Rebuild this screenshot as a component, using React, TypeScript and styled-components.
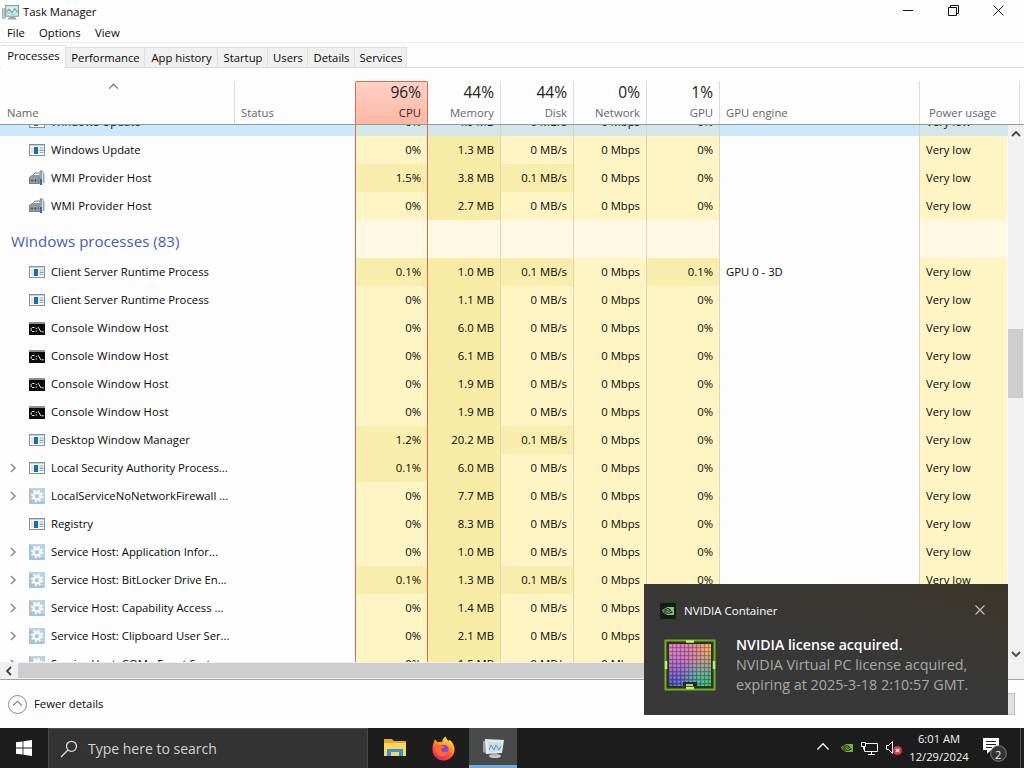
import React from "react";
import styled, { createGlobalStyle, css } from "styled-components";
import { SiNvidia } from "react-icons/si";

type IconKind = "app" | "wmi" | "console" | "gear";

type Process = {
  name: string;
  icon: IconKind;
  cpu: string;
  memory: string;
  disk: string;
  gpu?: string;
  engine?: string;
  expandable?: boolean;
  selected?: boolean;
};

const backgroundProcesses: Process[] = [
  { name: "Windows Update", icon: "app", cpu: "0%", memory: "4.9 MB", disk: "0 MB/s", selected: true },
  { name: "Windows Update", icon: "app", cpu: "0%", memory: "1.3 MB", disk: "0 MB/s" },
  { name: "WMI Provider Host", icon: "wmi", cpu: "1.5%", memory: "3.8 MB", disk: "0.1 MB/s" },
  { name: "WMI Provider Host", icon: "wmi", cpu: "0%", memory: "2.7 MB", disk: "0 MB/s" },
];

const windowsProcesses: Process[] = [
  { name: "Client Server Runtime Process", icon: "app", cpu: "0.1%", memory: "1.0 MB", disk: "0.1 MB/s", gpu: "0.1%", engine: "GPU 0 - 3D" },
  { name: "Client Server Runtime Process", icon: "app", cpu: "0%", memory: "1.1 MB", disk: "0 MB/s" },
  { name: "Console Window Host", icon: "console", cpu: "0%", memory: "6.0 MB", disk: "0 MB/s" },
  { name: "Console Window Host", icon: "console", cpu: "0%", memory: "6.1 MB", disk: "0 MB/s" },
  { name: "Console Window Host", icon: "console", cpu: "0%", memory: "1.9 MB", disk: "0 MB/s" },
  { name: "Console Window Host", icon: "console", cpu: "0%", memory: "1.9 MB", disk: "0 MB/s" },
  { name: "Desktop Window Manager", icon: "app", cpu: "1.2%", memory: "20.2 MB", disk: "0.1 MB/s" },
  { name: "Local Security Authority Process...", icon: "app", cpu: "0.1%", memory: "6.0 MB", disk: "0 MB/s", expandable: true },
  { name: "LocalServiceNoNetworkFirewall ...", icon: "gear", cpu: "0%", memory: "7.7 MB", disk: "0 MB/s", expandable: true },
  { name: "Registry", icon: "app", cpu: "0%", memory: "8.3 MB", disk: "0 MB/s" },
  { name: "Service Host: Application Infor...", icon: "gear", cpu: "0%", memory: "1.0 MB", disk: "0 MB/s", expandable: true },
  { name: "Service Host: BitLocker Drive En...", icon: "gear", cpu: "0.1%", memory: "1.3 MB", disk: "0.1 MB/s", expandable: true },
  { name: "Service Host: Capability Access ...", icon: "gear", cpu: "0%", memory: "1.4 MB", disk: "0 MB/s", expandable: true },
  { name: "Service Host: Clipboard User Ser...", icon: "gear", cpu: "0%", memory: "2.1 MB", disk: "0 MB/s", expandable: true },
  { name: "Service Host: COM+ Event Syste...", icon: "gear", cpu: "0%", memory: "1.5 MB", disk: "0 MB/s", expandable: true },
];

const tabs = [
  { label: "Processes", width: 65 },
  { label: "Performance", width: 79 },
  { label: "App history", width: 73 },
  { label: "Startup", width: 50 },
  { label: "Users", width: 40 },
  { label: "Details", width: 47 },
  { label: "Services", width: 52 },
];

const usageColumns = [
  { label: "CPU", total: "96%" },
  { label: "Memory", total: "44%" },
  { label: "Disk", total: "44%" },
  { label: "Network", total: "0%" },
  { label: "GPU", total: "1%" },
];

const ProcessIcon = ({ kind }: { kind: IconKind }) => {
  if (kind === "console") {
    return (
      <svg width="16" height="16" viewBox="0 0 16 16">
        <rect x="0" y="2" width="16" height="13" fill="#8f8f8f" />
        <rect x="0" y="4" width="16" height="11" fill="#0a0a0a" />
        <path d="M5.5 7.5H3.2l-1 1v2l1 1h2.3M7.3 8v1.200M7.3 10.500v1.200M9 7l3 5M12.5 11.800h2.2" stroke="#e8e8e8" fill="none" />
      </svg>
    );
  }
  if (kind === "gear") {
    return (
      <svg width="16" height="16" viewBox="0 0 16 16">
        <rect width="16" height="16" fill="#a6c3da" />
        <path d="M0 0h16v16z" fill="#b9d2e6" />
        <circle cx="8" cy="8" r="3.4" fill="none" stroke="#fafdff" strokeWidth="2.2" />
        <circle cx="8" cy="8" r="5.2" fill="none" stroke="#fafdff" strokeWidth="2" strokeDasharray="2.04 2.04" />
      </svg>
    );
  }
  if (kind === "wmi") {
    return (
      <svg width="16" height="16" viewBox="0 0 16 16">
        <path d="M3 6l3-3h5v3" fill="none" stroke="#77828c" />
        <path d="M0 7l3-2h8v9H0z" fill="#8f9aa3" />
        <path d="M0 8h10v6H0z" fill="#74808b" />
        <path d="M1 9h8M1 12h8" stroke="#b7c0c7" />
        <path d="M3 9v3M6.5 9v3" stroke="#434f59" />
        <path d="M12 1v14" stroke="#86a3bb" strokeWidth="2.4" />
        <path d="M14.7 4v9" stroke="#9aa6af" strokeWidth="1.6" />
        <path d="M11 1l1.5-1L15 4" fill="none" stroke="#8f9ba4" />
        <path d="M12 9v6" stroke="#41698c" strokeWidth="2" />
      </svg>
    );
  }
  return (
    <svg width="16" height="16" viewBox="0 0 16 16">
      <rect x="0.5" y="2.5" width="15" height="11" fill="#f6f8f9" stroke="#858f96" />
      <path d="M1 3.5h14" stroke="#c3d0d8" />
      <path d="M2 5.5h3.5v6H2z" fill="#dfe7ec" />
      <rect x="5" y="5" width="4" height="7" fill="#1f6ca4" />
      <path d="M10.5 6h4M10.5 10.5h4" stroke="#8fabbf" />
      <path d="M10.5 8.3h4" stroke="#3d88bb" />
    </svg>
  );
};

const MonitorIcon = ({ size }: { size: number }) => (
  <svg width={size} height={size} viewBox="0 0 16 16">
    <path d="M0.5 4.5h2.5v9H0.5z" fill="#c5cccf" stroke="#8d979b" strokeWidth="0.7" />
    <path d="M7 12h5l2 2.5H5z" fill="#9ba7ab" />
    <rect x="3.5" y="1.5" width="12" height="10" fill="#d5eeee" stroke="#8a979b" />
    <path d="M4 8l2.5-3 3 3 2.5-3.5L15 8" fill="none" stroke="#5fb0aa" strokeWidth="1.1" />
    <path d="M4 10l3-2 3 2 5-2" fill="none" stroke="#a6d3ce" />
  </svg>
);

type ChevronProps = {
  dir: "up" | "down" | "left" | "right";
  size?: number;
  color?: string;
  stroke?: number;
};

const chevronPaths = {
  up: "M1 6l4-4 4 4",
  down: "M1 3l4 4 4-4",
  left: "M7 1L3 5l4 4",
  right: "M3 1l4 4-4 4",
};

const Chevron = ({ dir, size = 8, color = "#8a8a8a", stroke = 1.3 }: ChevronProps) => (
  <svg width={size} height={size} viewBox="0 0 10 10">
    <path d={chevronPaths[dir]} fill="none" stroke={color} strokeWidth={stroke} />
  </svg>
);

const ProcessRow = ({ process }: { process: Process }) => {
  const { name, icon, cpu, memory, disk, gpu = "0%", engine = "", expandable, selected } = process;
  return (
    <Row $selected={selected}>
      <NameCell>
        <Expander>{expandable && <Chevron dir="right" size={10} stroke={1.5} />}</Expander>
        <ProcessIcon kind={icon} />
        <ProcessName $wide={name.includes("Host") && !expandable}>{name}</ProcessName>
      </NameCell>
      <StatusCell />
      <UsageCell $cpu $heat={cpu === "0%" ? 1 : 2}>{cpu}</UsageCell>
      <UsageCell $heat={3}>{memory}</UsageCell>
      <UsageCell $heat={disk === "0 MB/s" ? 1 : 2}>{disk}</UsageCell>
      <UsageCell $heat={1}>0 Mbps</UsageCell>
      <UsageCell $heat={gpu === "0%" ? 1 : 2}>{gpu}</UsageCell>
      <EngineCell>{engine}</EngineCell>
      <PowerCell $heat={1}>Very low</PowerCell>
    </Row>
  );
};

const LicenseToast = () => (
  <Toast>
    <ToastHeader>
      <NvidiaBadge>
        <SiNvidia size={12} color="#8fb78a" />
      </NvidiaBadge>
      <span>NVIDIA Container</span>
      <svg width="10" height="10" viewBox="0 0 10 10">
        <path d="M0.5 0.5l9 9M9.5 0.5l-9 9" stroke="#bdbdbd" strokeWidth="1.2" />
      </svg>
    </ToastHeader>
    <ToastContent>
      <svg width="52" height="52" viewBox="0 0 52 52">
        <defs>
          <linearGradient id="die" x1="0" y1="0" x2="1" y2="1">
            <stop offset="0" stopColor="#e070c0" />
            <stop offset="0.45" stopColor="#b76fb8" />
            <stop offset="0.65" stopColor="#58aa98" />
            <stop offset="1" stopColor="#2fb572" />
          </linearGradient>
          <radialGradient id="dieWarm" cx="0.95" cy="0.1" r="0.75">
            <stop offset="0" stopColor="#f7ad50" />
            <stop offset="1" stopColor="#e06a90" stopOpacity="0" />
          </radialGradient>
          <radialGradient id="dieCool" cx="0.05" cy="1" r="0.75">
            <stop offset="0" stopColor="#3c48c5" />
            <stop offset="1" stopColor="#6a50c8" stopOpacity="0" />
          </radialGradient>
          <pattern id="cores" width="4" height="4" patternUnits="userSpaceOnUse">
            <path d="M0 0.5h4M0.5 0v4" stroke="#20202e" strokeOpacity="0.28" />
            <rect x="2" y="2" width="1.4" height="1.4" fill="#fff" fillOpacity="0.3" />
          </pattern>
        </defs>
        <rect x="1.5" y="1.5" width="49" height="49" fill="#26351b" stroke="#78ad20" strokeWidth="2" />
        <rect x="5" y="5" width="42" height="42" fill="url(#die)" />
        <rect x="5" y="5" width="42" height="42" fill="url(#dieWarm)" />
        <rect x="5" y="5" width="42" height="42" fill="url(#dieCool)" />
        <rect x="5" y="5" width="42" height="42" fill="url(#cores)" />
        <path d="M19 47v-4h14v4z" fill="#252b24" />
        <path d="M22 2.5h8M22 49h8M2 22v8M50 22v8" stroke="#c6ee63" strokeWidth="2.5" />
        <path d="M22 46h7" stroke="#b8c2a4" strokeWidth="2" />
      </svg>
      <ToastText>
        <strong>NVIDIA license acquired.</strong>
        <span>NVIDIA Virtual PC license acquired,</span>
        <span>expiring at 2025-3-18 2:10:57 GMT.</span>
      </ToastText>
    </ToastContent>
  </Toast>
);

const TaskbarPanel = () => (
  <Taskbar>
    <StartButton>
      <svg width="16" height="16" viewBox="0 0 16 16" fill="#fff">
        <path d="M0 2.3l6.6-.9v6.2H0zM7.4 1.2L16 0v7.6H7.4zM0 8.4h6.6v6.2L0 13.7zM7.4 8.4H16V16l-8.6-1.2z" />
      </svg>
    </StartButton>
    <SearchBox>
      <svg width="18" height="18" viewBox="0 0 18 18" fill="none" stroke="#dedede" strokeWidth="1.3">
        <circle cx="11.5" cy="6.3" r="5" />
        <path d="M8 10L1 17" />
      </svg>
      <span>Type here to search</span>
    </SearchBox>
    <AppButton>
      <svg width="24" height="24" viewBox="0 0 24 24">
        <path d="M1 3h8l2 2h12v15H1z" fill="#e9a823" />
        <path d="M1 7h22v13H1z" fill="#fbd75e" />
        <path d="M4 20v-7h16v7h-4v-4H8v4z" fill="#3d8fd4" />
        <path d="M8 20v-4h8v4z" fill="#f5d469" />
      </svg>
    </AppButton>
    <AppButton>
      <svg width="25" height="25" viewBox="0 0 26 26">
        <defs>
          <linearGradient id="fox" x1="0.8" y1="0" x2="0.3" y2="1">
            <stop offset="0" stopColor="#fff04a" />
            <stop offset="0.4" stopColor="#ff9826" />
            <stop offset="0.7" stopColor="#ff4a3d" />
            <stop offset="1" stopColor="#e5206d" />
          </linearGradient>
        </defs>
        <path d="M3 6.5l1-3 3 3c1.5-.7 3-.7 4.5-.3.3-2.5 1.8-4.5 3.8-5.7.4 2.500 2 3.600 3.400 4.800l.8-1.300c3.500 3 5 6.500 5 10A11.500 11.500 0 0 1 1.500 14C1.300 11 2 8.500 3 6.500z" fill="url(#fox)" />
        <circle cx="13.3" cy="14" r="5" fill="#8548d8" />
        <path d="M4.5 10c2.5-1.5 5-.6 7.5.3l2.5.7c-.3 1.500-2.500 1.500-3.500 2.200-1 1.300-.3 2.800 1 3.500 2 .8 3.500-.5 5.500-.5-1 4-5 5.500-8 4.500-4-1.400-6-6-5-10.700z" fill="#ff6a35" />
      </svg>
    </AppButton>
    <AppButton $active>
      <svg width="24" height="24" viewBox="0 0 24 24">
        <path d="M2 5l4-1v14l-4-2z" fill="#999f9f" />
        <path d="M4 3l19 1-2 13-16 1z" fill="#e6e9ea" />
        <path d="M7 6l14 .5-1.500 8.500L8 16z" fill="#c2dde5" />
        <path d="M8 14l2-5 3 5 2-5 3 5 2-4" fill="none" stroke="#6a93a5" />
        <ellipse cx="14" cy="20" rx="6" ry="2" fill="#c8cccc" />
        <path d="M11 17h5v3h-5z" fill="#aeb4b5" />
      </svg>
    </AppButton>
    <Tray>
      <Chevron dir="up" size={14} color="#f2f2f2" stroke={1} />
      <SiNvidia size={12} color="#72b340" />
      <svg width="17" height="15" viewBox="0 0 17 15" fill="none" stroke="#f5f5f5">
        <path d="M5 2.5h11.5v8H3.5V6M7 13.5h7M10.5 10.5v3" />
        <path d="M0.5 1.5h4v4h-4zM2.5 5.5v3" />
      </svg>
      <svg width="17" height="16" viewBox="0 0 17 16">
        <path d="M0.5 5.5h2l4-4v12l-4-4h-2z" fill="none" stroke="#f5f5f5" />
        <circle cx="11.5" cy="10.5" r="4.5" fill="#d83a43" />
        <path d="M9.8 8.8l3.4 3.4M13.2 8.800l-3.400 3.400" stroke="#fff" strokeWidth="1.2" />
      </svg>
    </Tray>
    <Clock>
      <span>6:01 AM</span>
      <span>12/29/2024</span>
    </Clock>
    <NotificationButton>
      <svg width="24" height="25" viewBox="0 0 24 25">
        <path d="M0 1h16v12H8l-4 4v-4H0z" fill="#fff" />
        <path d="M3 4.5h10M3 7.5h10M3 10.5h6" stroke="#1f1f1f" />
        <circle cx="15.5" cy="16.5" r="7.8" fill="#333" stroke="#858585" />
      </svg>
      <Badge>2</Badge>
    </NotificationButton>
    <ShowDesktop />
  </Taskbar>
);

const App = () => (
  <Desktop>
    <GlobalStyle />
    <TitleBar>
      <MonitorIcon size={17} />
      <span>Task Manager</span>
      <WindowControls>
        <svg width="11" height="11" viewBox="0 0 11 11"><path d="M0 5.5h10" stroke="#111" /></svg>
        <svg width="11" height="11" viewBox="0 0 11 11" fill="none" stroke="#111">
          <path d="M0.5 2.5h8v8h-8zM2.5 2.5v-2h8v8h-2" />
        </svg>
        <svg width="11" height="11" viewBox="0 0 11 11"><path d="M0.5 0.5l10 10M10.5 0.5l-10 10" stroke="#111" /></svg>
      </WindowControls>
    </TitleBar>
    <MenuBar>
      <MenuItem $width={32}>File</MenuItem>
      <MenuItem $width={56}>Options</MenuItem>
      <MenuItem $width={40}>View</MenuItem>
    </MenuBar>
    <TabBar>
      {tabs.map((tab, index) => (
        <Tab key={tab.label} $width={tab.width} $active={index === 0}>{tab.label}</Tab>
      ))}
    </TabBar>
    <TableHeader>
      <NameHeader>
        <Chevron dir="up" size={11} color="#777" stroke={1.1} />
        <span>Name</span>
      </NameHeader>
      <StatusHeader>Status</StatusHeader>
      {usageColumns.map((column) => (
        <UsageHeader key={column.label} $cpu={column.label === "CPU"}>
          <strong>{column.total}</strong>
          <span>{column.label}</span>
        </UsageHeader>
      ))}
      <EngineHeader>GPU engine</EngineHeader>
      <PowerHeader>Power usage</PowerHeader>
    </TableHeader>
    <TableArea>
      <Rows>
        {backgroundProcesses.map((process, index) => <ProcessRow key={index} process={process} />)}
        <GroupRow>
          <GroupTitle>Windows processes (83)</GroupTitle>
          <UsageCell $cpu $heat={0} />
          <UsageCell $heat={0} />
          <UsageCell $heat={0} />
          <UsageCell $heat={0} />
          <UsageCell $heat={0} />
          <EngineCell />
          <PowerCell $heat={0} />
        </GroupRow>
        {windowsProcesses.map((process, index) => <ProcessRow key={index} process={process} />)}
      </Rows>
      <VerticalScroll>
        <Chevron dir="up" size={10} color="#444" stroke={1.8} />
        <VerticalThumb />
        <Chevron dir="down" size={10} color="#444" stroke={1.8} />
      </VerticalScroll>
    </TableArea>
    <HorizontalScroll>
      <Chevron dir="left" size={10} color="#444" stroke={1.8} />
      <HorizontalThumb />
    </HorizontalScroll>
    <Footer>
      <DetailsToggle>
        <Chevron dir="up" size={11} color="#777" stroke={1} />
      </DetailsToggle>
      <span>Fewer details</span>
      <EndTaskButton />
    </Footer>
    <TaskbarPanel />
    <LicenseToast />
  </Desktop>
);

export default App;

const GlobalStyle = createGlobalStyle`
  * {
    box-sizing: border-box;
  }
  body {
    margin: 0;
    overflow: hidden;
  }
  svg {
    display: block;
    flex: none;
  }
`;

const Desktop = styled.div`
  position: relative;
  display: flex;
  flex-direction: column;
  width: 1024px;
  height: 768px;
  overflow: hidden;
  background: #fdfdfd;
  color: #080808;
  font-family: "Open Sans", "Noto Sans", sans-serif;
  font-size: 11.3px;
  line-height: 16px;
  white-space: nowrap;
`;

const TitleBar = styled.div`
  display: flex;
  align-items: center;
  height: 24px;
  padding-left: 2px;
  gap: 4px;
`;

const WindowControls = styled.div`
  display: flex;
  gap: 34px;
  margin-left: auto;
  padding: 0 20px 3px 0;
`;

const MenuBar = styled.div`
  display: flex;
  align-items: center;
  height: 19px;
  padding-left: 7px;
  border-bottom: 1px solid #ededed;
`;

const MenuItem = styled.span<{ $width: number }>`
  width: ${(props) => props.$width}px;
`;

const TabBar = styled.div`
  display: flex;
  align-items: flex-end;
  height: 25px;
  padding-left: 1px;
  border-bottom: 1px solid #dcdcdc;
`;

const Tab = styled.div<{ $width: number; $active: boolean }>`
  width: ${(props) => props.$width}px;
  height: 20px;
  padding-left: 1px;
  line-height: 20px;
  text-align: center;
  background: #f0f0f0;
  border: 1px solid #dedede;
  border-left-width: 0;
  border-bottom: 0;
  ${(props) => props.$active && css`
    height: 23px;
    margin-bottom: -1px;
    background: #fdfdfd;
  `}
`;

const TableHeader = styled.div`
  display: flex;
  height: 57px;
  padding-top: 13px;
  color: #666;
  border-bottom: 1px solid #8d9ba5;
`;

const headerCell = css`
  display: flex;
  align-items: flex-end;
  padding-bottom: 3px;
  border-right: 1px solid #dcdcdc;
`;

const NameHeader = styled.div`
  ${headerCell}
  flex-direction: column;
  justify-content: space-between;
  align-items: flex-start;
  width: 235px;
  padding-top: 1px;
  padding-left: 7px;
  svg {
    margin-left: 101px;
  }
`;

const StatusHeader = styled.div`
  ${headerCell}
  width: 120px;
  padding-left: 6px;
  border-right: 0;
`;

const UsageHeader = styled.div<{ $cpu: boolean }>`
  ${headerCell}
  flex-direction: column;
  justify-content: space-between;
  width: 73px;
  padding-right: 6px;
  strong {
    padding-top: 3px;
    color: #222;
    font-size: 15.5px;
    font-weight: 400;
  }
  ${(props) => props.$cpu && css`
    color: #3a1d16;
    background: linear-gradient(#fdd2c5, #fdb7a4);
    border: 1px solid #e06a4c;
    border-bottom: 0;
    border-radius: 2px 2px 0 0;
    strong {
      padding-top: 2px;
    }
  `}
`;

const EngineHeader = styled.div`
  ${headerCell}
  width: 200px;
  padding-left: 6px;
`;

const PowerHeader = styled.div`
  ${headerCell}
  width: 100px;
  padding-left: 9px;
`;

const TableArea = styled.div`
  display: flex;
  height: 537px;
`;

const Rows = styled.div`
  width: 1008px;
  overflow: hidden;
  & > :first-child {
    margin-top: -17px;
  }
`;

const cellColors = ["#fff9e3", "#fff4c4", "#f9edad", "#f7eba5"];

const UsageCell = styled.div<{ $heat: number; $cpu?: boolean }>`
  width: 73px;
  padding-right: 6px;
  text-align: right;
  background: ${(props) => cellColors[props.$heat]};
  border-right: 1px solid #dcd6b4;
  ${(props) => props.$cpu && css`
    border-left: 1px solid #e06a4c;
    border-right: 1px solid #e06a4c;
  `}
`;

const EngineCell = styled.div`
  width: 200px;
  padding-left: 6px;
  border-right: 1px solid #dcd6b4;
`;

const PowerCell = styled.div<{ $heat: number }>`
  width: 87px;
  padding-left: 6px;
  background: ${(props) => cellColors[props.$heat]};
`;

const Row = styled.div<{ $selected?: boolean }>`
  display: flex;
  height: 28px;
  line-height: 28px;
  ${(props) => props.$selected && css`
    background: #cce8fd;
    ${UsageCell}, ${PowerCell} {
      background: #d3e6e8;
    }
  `}
`;

const NameCell = styled.div`
  display: flex;
  align-items: center;
  width: 235px;
  gap: 6px;
`;

const ProcessName = styled.span<{ $wide: boolean }>`
  letter-spacing: ${(props) => (props.$wide ? "0.12px" : "0")};
`;

const Expander = styled.div`
  width: 23px;
  padding-left: 8px;
`;

const StatusCell = styled.div`
  width: 120px;
`;

const GroupRow = styled.div`
  display: flex;
  height: 38px;
`;

const GroupTitle = styled.div`
  width: 355px;
  padding-left: 11px;
  color: #4260b0;
  font-size: 15.1px;
  line-height: 43px;
`;

const VerticalScroll = styled.div`
  display: flex;
  flex-direction: column;
  justify-content: space-between;
  align-items: center;
  width: 16px;
  padding: 5px 1px 3px 0;
  background: #f0f0f0;
`;

const VerticalThumb = styled.div`
  width: 15px;
  height: 69px;
  margin-bottom: 63px;
  background: #cdcdcd;
`;

const HorizontalScroll = styled.div`
  display: flex;
  align-items: center;
  height: 18px;
  padding-left: 4px;
  gap: 4px;
  background: #f0f0f0;
  border-bottom: 1px solid #a5a5a5;
`;

const HorizontalThumb = styled.div`
  width: 780px;
  height: 15px;
  background: #cdcdcd;
`;

const Footer = styled.div`
  display: flex;
  align-items: center;
  height: 48px;
  padding: 0 9px 0 8px;
  gap: 7px;
`;

const DetailsToggle = styled.div`
  display: flex;
  align-items: center;
  justify-content: center;
  width: 19px;
  height: 19px;
  border: 1px solid #8b8b8b;
  border-radius: 50%;
`;

const EndTaskButton = styled.div`
  width: 76px;
  height: 22px;
  margin-left: auto;
  background: #e1e1e1;
  border: 1px solid #bcbcbc;
`;

const Taskbar = styled.div`
  display: flex;
  height: 40px;
  color: #f5f5f5;
  background: #1d1d1d;
`;

const StartButton = styled.div`
  display: flex;
  align-items: center;
  justify-content: center;
  width: 48px;
`;

const SearchBox = styled.div`
  display: flex;
  align-items: center;
  width: 320px;
  margin-right: 3px;
  padding-left: 11px;
  gap: 10px;
  color: #d2d2d2;
  background: #333;
  border: 1px solid #4a4a4a;
  border-bottom: 0;
  font-size: 14px;
`;

const AppButton = styled.div<{ $active?: boolean }>`
  display: flex;
  align-items: center;
  justify-content: center;
  width: 49px;
  padding-right: 2px;
  ${(props) => props.$active && css`
    width: 48px;
    padding: 2px 0 0;
    background: #484a4b;
    border-bottom: 3px solid #72acd5;
  `}
`;

const Tray = styled.div`
  display: flex;
  align-items: center;
  margin-left: auto;
  margin-right: -4px;
  gap: 8px;
  & > :first-child {
    margin-right: 3px;
  }
`;

const Clock = styled.div`
  display: flex;
  flex-direction: column;
  align-items: center;
  width: 80px;
  padding-top: 2px;
  font-size: 11.2px;
  line-height: 18px;
`;

const NotificationButton = styled.div`
  position: relative;
  display: flex;
  align-items: center;
  width: 41px;
  padding: 3px 4px 0;
`;

const Badge = styled.span`
  position: absolute;
  left: 16px;
  top: 19px;
  font-size: 11px;
  line-height: 15px;
`;

const ShowDesktop = styled.div`
  width: 4px;
  border-left: 1px solid #555;
`;

const Toast = styled.div`
  position: absolute;
  left: 644px;
  top: 584px;
  width: 364px;
  height: 131px;
  padding: 19px 16px 0;
  color: #fff;
  background: linear-gradient(15deg, #383838 50%, #3a3833 75%, #3b3528);
`;

const ToastHeader = styled.div`
  display: flex;
  align-items: center;
  gap: 8px;
  font-size: 11.5px;
  & > svg {
    margin: 0 7px 2px auto;
  }
`;

const NvidiaBadge = styled.div`
  display: flex;
  align-items: center;
  justify-content: center;
  width: 16px;
  height: 16px;
  background: #10200d;
`;

const ToastContent = styled.div`
  display: flex;
  align-items: flex-start;
  gap: 20px;
  padding: 16px 0 0 4px;
  & > svg {
    margin-top: 4px;
  }
`;

const ToastText = styled.div`
  display: flex;
  flex-direction: column;
  color: #a9a9a9;
  font-size: 14.35px;
  line-height: 20px;
  strong {
    color: #fff;
    font-size: 14.15px;
    font-weight: 600;
  }
`;
